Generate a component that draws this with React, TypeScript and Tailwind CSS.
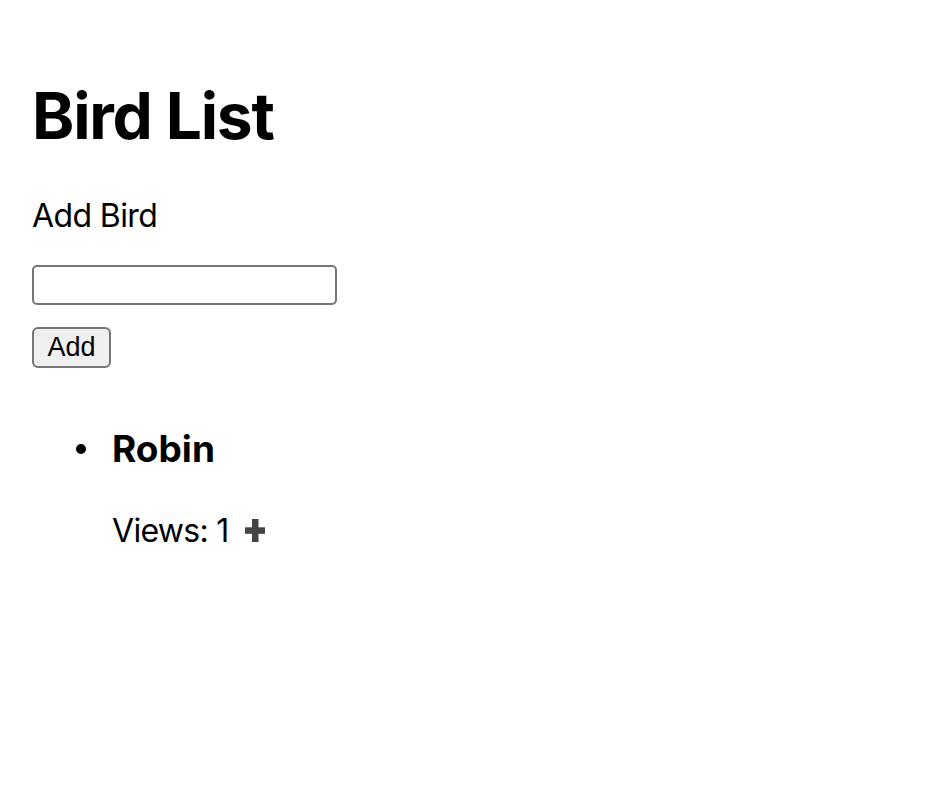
import { useState } from "react";

type Bird = { name: string; views: number };

const App = () => {
  const [name, setName] = useState("");
  const [birds, setBirds] = useState<Bird[]>([{ name: "Robin", views: 1 }]);

  const addBird = () => {
    if (!name.trim()) return;
    setBirds((prev) => [...prev, { name: name.trim(), views: 1 }]);
    setName("");
  };

  const incrementViews = (index: number) => {
    setBirds((prev) =>
      prev.map((b, i) => (i === index ? { ...b, views: b.views + 1 } : b))
    );
  };

  return (
    <div className="min-h-screen bg-white p-8 font-['Inter','Noto_Sans',sans-serif] text-black">
      <h1 className="mt-[45px] text-[64px] leading-[78px] font-bold tracking-[-1.2px]">Bird List</h1>

      {/* ─── Add form ───────────────────── */}
      <p className="mt-[41px] text-[32px] leading-[39px] tracking-[-0.6px]">Add Bird</p>
      <input
        value={name}
        onChange={(e) => setName(e.target.value)}
        className="mt-[30px] block w-[305px] h-[40px] border-2 border-[#767676] rounded-[5px] px-1 text-[26px] bg-white"
      />
      <button
        onClick={addBird}
        className="mt-[22px] block w-[79px] h-[41px] border-2 border-[#767676] rounded-[6px] bg-[#efefef] font-['Liberation_Sans',Arial,sans-serif] text-[27px] leading-none text-black"
      >
        Add
      </button>

      {/* ─── Birds ───────────────────── */}
      <ul className="mt-[58px] pl-[80px] text-[32px]">
        {birds.map((bird, i) => (
          <li key={bird.name + i} className="relative">
            <span className="absolute left-[-36px] top-[18px] w-[10px] h-[10px] rounded-full bg-black" />
            <h3 className="text-[37px] leading-[45px] font-bold">{bird.name}</h3>
            <div className="mt-[40px] flex items-center">
              <span className="leading-[39px] tracking-[-0.7px]">Views: {bird.views}</span>
              <button
                onClick={() => incrementViews(i)}
                aria-label="Add view"
                className="ml-[16px] text-[#444444]"
              >
                <svg width="20" height="23" viewBox="0 0 20 23" fill="currentColor">
                  <rect x="7" y="0" width="6.5" height="23" />
                  <rect x="0" y="8.3" width="20" height="6.5" />
                </svg>
              </button>
            </div>
          </li>
        ))}
      </ul>
    </div>
  );
};

export default App;
